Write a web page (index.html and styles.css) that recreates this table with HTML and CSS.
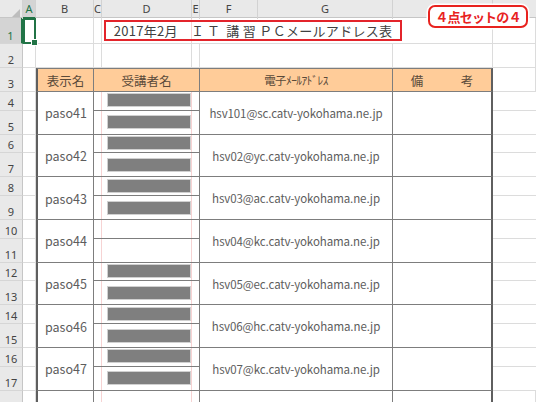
FILE: index.html
```
<!DOCTYPE html>
<html lang="ja">
<head>
<meta charset="utf-8">
<title>PCメールアドレス表</title>
<link rel="stylesheet" href="styles.css">
</head>
<body>
<div class="sheet">
  <div class="colhdr">
    <div class="corner"><span class="tri"></span></div>
    <div class="selhdr">A</div>
    <div>B</div>
    <div>C</div>
    <div>D</div>
    <div>E</div>
    <div>F</div>
    <div>G</div>
    <div></div>
    <div class="last"></div>
  </div>

  <div class="body">
    <div class="row h26">
      <div class="rh selrh">1</div>
      <div class="g sel"></div>
      <div class="g"></div>
      <div class="g"></div>
      <div class="titlecell"><div class="title">2017年2月　<span class="it">ＩＴ</span> 講 習 ＰＣメールアドレス表</div></div>
      <div class="g"></div>
    </div>
    <div class="row h24">
      <div class="rh">2</div>
      <div class="g"></div>
      <div class="g"></div>
      <div class="g"></div>
      <div class="g"></div>
      <div class="g"></div>
      <div class="g span2"></div>
      <div class="g"></div>
      <div class="g"></div>
    </div>
    <div class="row h24">
      <div class="rh">3</div>
      <div class="g"></div>
      <div class="t th tl">表示名</div>
      <div class="t th span3">受講者名</div>
      <div class="t th span2 narrow">電子ﾒｰﾙｱﾄﾞﾚｽ</div>
      <div class="t th tr">備　　　考</div>
      <div class="g"></div>
    </div>

    <div class="pair">
      <div class="rh r1">4</div><div class="g ca r1"></div>
      <div class="t tl name">paso41</div>
      <div class="t who r1"><span class="bar"></span></div>
      <div class="t mail">hsv101@sc.catv-yokohama.ne.jp</div>
      <div class="t tr note"></div>
      <div class="g r1 ci"></div>
      <div class="rh r2">5</div><div class="g ca r2"></div>
      <div class="t who r2"><span class="bar"></span></div>
      <div class="g r2 ci"></div>
    </div>

    <div class="pair">
      <div class="rh r1">6</div><div class="g ca r1"></div>
      <div class="t tl name">paso42</div>
      <div class="t who r1"><span class="bar"></span></div>
      <div class="t mail">hsv02@yc.catv-yokohama.ne.jp</div>
      <div class="t tr note"></div>
      <div class="g r1 ci"></div>
      <div class="rh r2">7</div><div class="g ca r2"></div>
      <div class="t who r2"><span class="bar"></span></div>
      <div class="g r2 ci"></div>
    </div>

    <div class="pair">
      <div class="rh r1">8</div><div class="g ca r1"></div>
      <div class="t tl name">paso43</div>
      <div class="t who r1"><span class="bar"></span></div>
      <div class="t mail">hsv03@ac.catv-yokohama.ne.jp</div>
      <div class="t tr note"></div>
      <div class="g r1 ci"></div>
      <div class="rh r2">9</div><div class="g ca r2"></div>
      <div class="t who r2"><span class="bar"></span></div>
      <div class="g r2 ci"></div>
    </div>

    <div class="pair">
      <div class="rh r1">10</div><div class="g ca r1"></div>
      <div class="t tl name">paso44</div>
      <div class="t who r1"></div>
      <div class="t mail">hsv04@kc.catv-yokohama.ne.jp</div>
      <div class="t tr note"></div>
      <div class="g r1 ci"></div>
      <div class="rh r2">11</div><div class="g ca r2"></div>
      <div class="t who r2"></div>
      <div class="g r2 ci"></div>
    </div>

    <div class="pair">
      <div class="rh r1">12</div><div class="g ca r1"></div>
      <div class="t tl name">paso45</div>
      <div class="t who r1"><span class="bar"></span></div>
      <div class="t mail">hsv05@ec.catv-yokohama.ne.jp</div>
      <div class="t tr note"></div>
      <div class="g r1 ci"></div>
      <div class="rh r2">13</div><div class="g ca r2"></div>
      <div class="t who r2"><span class="bar"></span></div>
      <div class="g r2 ci"></div>
    </div>

    <div class="pair">
      <div class="rh r1">14</div><div class="g ca r1"></div>
      <div class="t tl name">paso46</div>
      <div class="t who r1"><span class="bar"></span></div>
      <div class="t mail">hsv06@hc.catv-yokohama.ne.jp</div>
      <div class="t tr note"></div>
      <div class="g r1 ci"></div>
      <div class="rh r2">15</div><div class="g ca r2"></div>
      <div class="t who r2"><span class="bar"></span></div>
      <div class="g r2 ci"></div>
    </div>

    <div class="pair">
      <div class="rh r1">16</div><div class="g ca r1"></div>
      <div class="t tl name">paso47</div>
      <div class="t who r1"><span class="bar"></span></div>
      <div class="t mail">hsv07@kc.catv-yokohama.ne.jp</div>
      <div class="t tr note"></div>
      <div class="g r1 ci"></div>
      <div class="rh r2">17</div><div class="g ca r2"></div>
      <div class="t who r2"><span class="bar"></span></div>
      <div class="g r2 ci"></div>
    </div>

    <div class="row h24">
      <div class="rh"></div>
      <div class="g"></div>
      <div class="t tl"></div>
      <div class="t span3"></div>
      <div class="t span2"></div>
      <div class="t tr"></div>
      <div class="g"></div>
    </div>
  </div>

  <div class="badge">４点セットの４</div>
</div>
</body>
</html>
```

FILE: styles.css
```
* { box-sizing: border-box; margin: 0; padding: 0; }

body {
  width: 536px;
  height: 402px;
  overflow: hidden;
  background: #fff;
  font-family: "Noto Sans CJK JP", "Noto Sans", sans-serif;
}

.sheet {
  --cols: 23px 13px 58px 8px 90px 8px 58px 135px 100px 1fr;
  position: relative;
  width: 536px;
  height: 402px;
  overflow: hidden;
}

/* column header strip */
.colhdr {
  display: grid;
  grid-template-columns: var(--cols);
  height: 18px;
  background: #e9e9e9;
  border-bottom: 1px solid #c6c6c6;
}
.colhdr > div {
  font: 11px "Noto Sans", sans-serif;
  color: #444;
  text-align: center;
  line-height: 18px;
  border-right: 1px solid #d2d2d2;
}
.colhdr > .last { border-right: none; }
.colhdr > .selhdr {
  background: #d4d4d4;
  color: #217346;
  border-bottom: 2px solid #217346;
  line-height: 17px;
}
.corner { position: relative; }
.tri {
  position: absolute;
  right: 2px;
  bottom: 2px;
  width: 0;
  height: 0;
  border-left: 8px solid transparent;
  border-bottom: 8px solid #bdbdbd;
}

/* sheet body */
.body {
  background-image:
    linear-gradient(to right, transparent 101px, #f6d3d3 101px, #f6d3d3 102px, transparent 102px),
    linear-gradient(to right, transparent 191px, #f6d3d3 191px, #f6d3d3 192px, transparent 192px);
}

.row {
  display: grid;
  grid-template-columns: var(--cols);
}
.h26 { height: 26px; }
.h24 { height: 24px; }

.pair {
  display: grid;
  grid-template-columns: var(--cols);
  grid-template-rows: 18.7px 24px;
}

.rh {
  background: #e9e9e9;
  border-right: 1px solid #c6c6c6;
  border-bottom: 1px solid #d6d6d6;
  font: 11px "Noto Sans", sans-serif;
  color: #444;
  display: flex;
  align-items: flex-end;
  justify-content: center;
  padding-bottom: 1px;
  line-height: 13px;
}
.pair .rh { grid-column: 1; }
.selrh {
  background: #d4d4d4;
  color: #217346;
  border-right: 2px solid #217346;
}

.g {
  border-right: 1px solid #dcdcdc;
  border-bottom: 1px solid #dcdcdc;
}
.ca { grid-column: 2; }
.span2 { grid-column: span 2; }
.span3 { grid-column: span 3; }

.sel {
  position: relative;
  border: 2px solid #217346;
}
.sel::after {
  content: "";
  position: absolute;
  right: -4px;
  bottom: -4px;
  width: 5px;
  height: 5px;
  background: #217346;
  border: 1px solid #fff;
}

/* title */
.titlecell {
  grid-column: span 5;
  border-bottom: 1px solid #dcdcdc;
  border-right: 1px solid #dcdcdc;
  display: flex;
  align-items: center;
  padding-left: 2px;
}
.title {
  width: 298px;
  height: 21px;
  border: 2px solid #e3242b;
  color: #404040;
  font-size: 13px;
  line-height: 17px;
  text-align: center;
  white-space: nowrap;
  letter-spacing: 0.3px;
}
.it { letter-spacing: 3px; }

/* table */
.t {
  border-right: 1px solid #7d7d7d;
  border-bottom: 1px solid #7d7d7d;
  color: #5d5d5d;
  display: flex;
  align-items: center;
  justify-content: center;
  white-space: nowrap;
}
.tl { border-left: 2px solid #5f5f5f; }
.tr { border-right: 2px solid #5f5f5f; }
.th {
  background: #ffcc99;
  border-top: 1px solid #7d7d7d;
  font-size: 12.5px;
  color: #5a4a3a;
}
.narrow { font-size: 11.5px; letter-spacing: -0.6px; }

.name {
  grid-row: 1 / 3;
  grid-column: 3;
  justify-content: flex-start;
  padding-left: 7px;
  font-size: 12.5px;
}
.who {
  grid-column: 4 / 7;
  justify-content: flex-start;
  padding-left: 13px;
}
.r1 { grid-row: 1; }
.r2 { grid-row: 2; }
.who.r1 { padding-bottom: 1px; }
.mail {
  grid-row: 1 / 3;
  grid-column: 7 / 9;
  font-size: 11.5px;
  letter-spacing: -0.1px;
}
.note {
  grid-row: 1 / 3;
  grid-column: 9;
}
.ci { grid-column: 10; border-right: none; }

.bar {
  display: block;
  width: 84px;
  height: 14px;
  background: #7f7f7f;
  border: 1px solid #d0d0d0;
}

/* badge */
.badge {
  position: absolute;
  left: 428px;
  top: 5px;
  width: 100px;
  height: 23px;
  border: 2px solid #e8231f;
  border-radius: 7px;
  background: #fff;
  box-shadow: 0 0 0 1.5px #fff;
  color: #e8231f;
  font-weight: bold;
  font-size: 13px;
  letter-spacing: -0.8px;
  line-height: 19px;
  text-align: center;
  white-space: nowrap;
}
```
